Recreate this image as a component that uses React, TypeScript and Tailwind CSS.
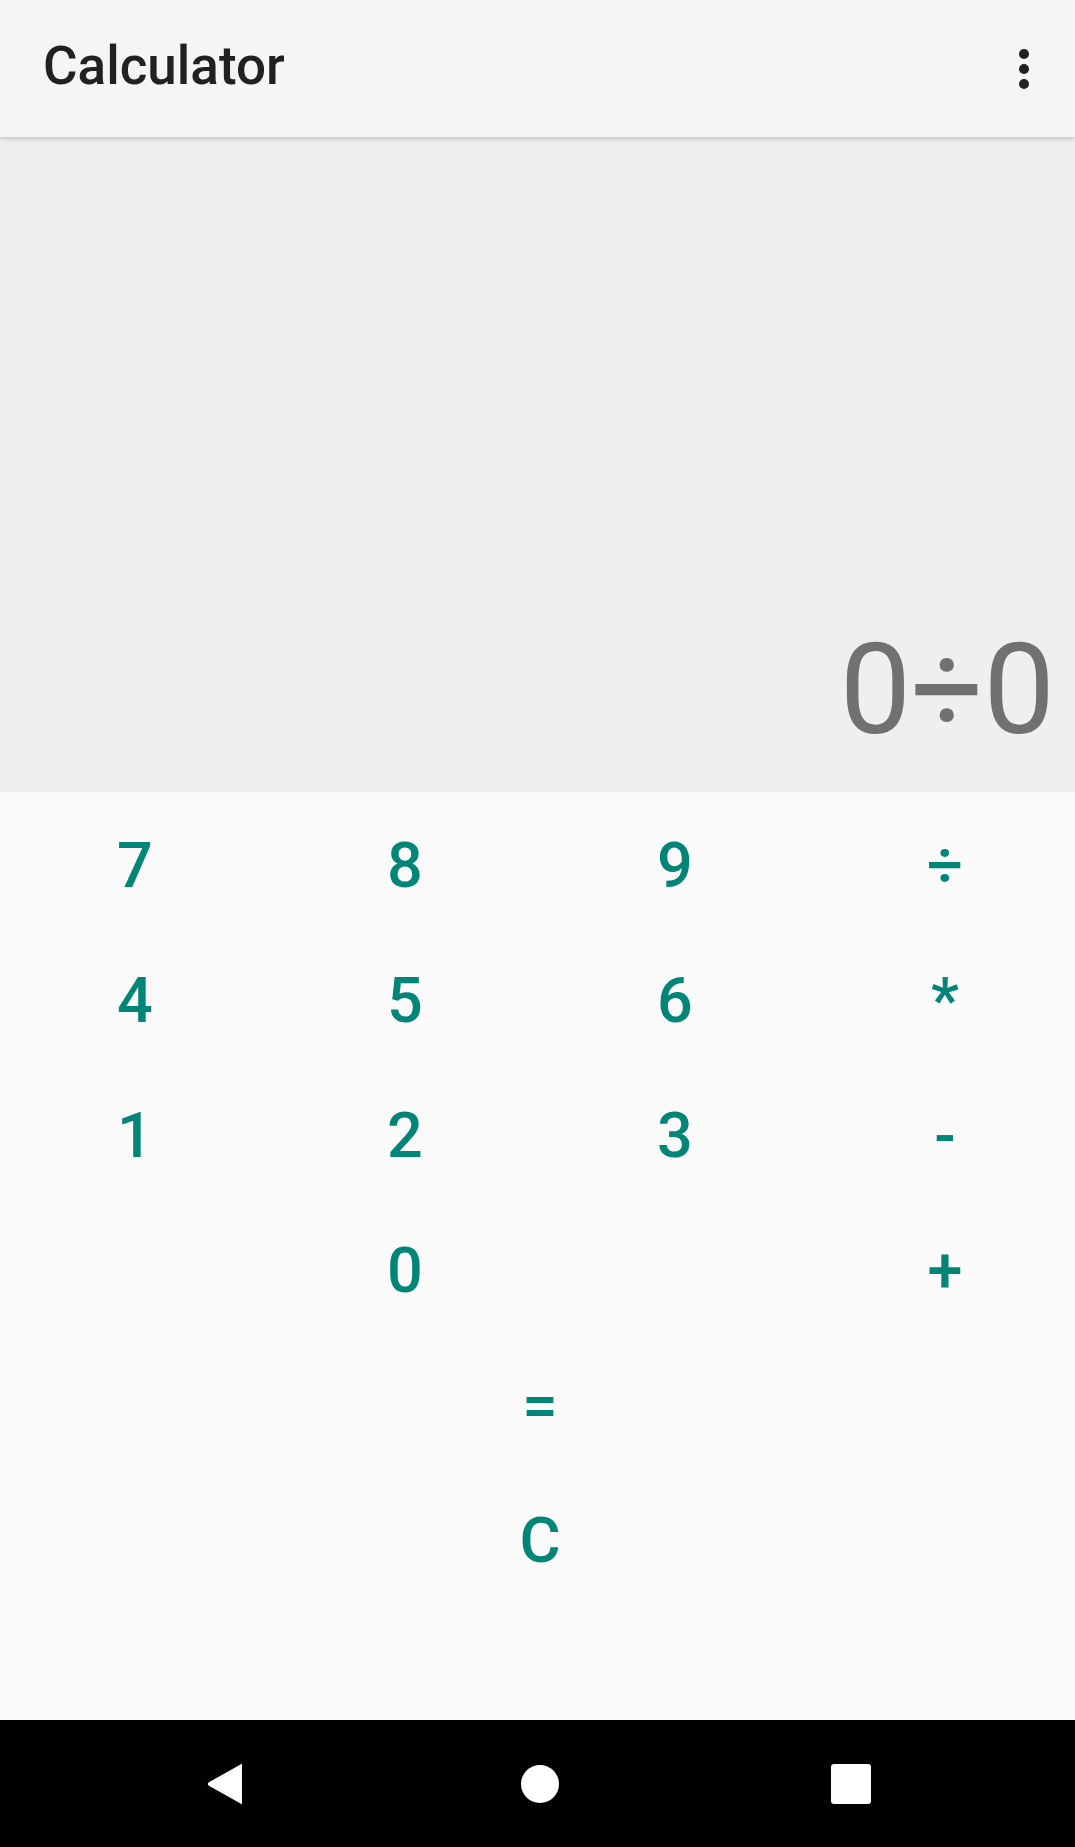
import React, { useState } from 'react';

const keys: { label: string; col: string }[] = [
  { label: '7', col: 'col-start-1' },
  { label: '8', col: 'col-start-2' },
  { label: '9', col: 'col-start-3' },
  { label: '÷', col: 'col-start-4' },
  { label: '4', col: 'col-start-1' },
  { label: '5', col: 'col-start-2' },
  { label: '6', col: 'col-start-3' },
  { label: '*', col: 'col-start-4' },
  { label: '1', col: 'col-start-1' },
  { label: '2', col: 'col-start-2' },
  { label: '3', col: 'col-start-3' },
  { label: '-', col: 'col-start-4' },
  { label: '0', col: 'col-start-2' },
  { label: '+', col: 'col-start-4' },
];

const App: React.FC = () => {
  const [display, setDisplay] = useState('0÷0');

  const press = (k: string) => {
    if (k === 'C') setDisplay('');
    else setDisplay(display + k);
  };

  return (
    <div className="flex h-[1847px] w-full flex-col overflow-hidden bg-[#fafafa] font-['Roboto',sans-serif]">
      {/* app bar */}
      <div className="relative z-10 flex h-[137px] shrink-0 items-center justify-between bg-[#f5f5f5] pl-[43px] pr-[38px] shadow-[0_2px_4px_rgba(0,0,0,0.18)]">
        <h1 className="pb-[3px] text-[53px] font-medium text-[#212121]">Calculator</h1>
        <button className="flex flex-col items-center gap-[5px] px-2 py-2">
          <span className="h-[10px] w-[10px] rounded-full bg-[#212121]" />
          <span className="h-[10px] w-[10px] rounded-full bg-[#212121]" />
          <span className="h-[10px] w-[10px] rounded-full bg-[#212121]" />
        </button>
      </div>

      {/* display */}
      <div className="flex flex-1 items-end justify-end bg-[#efefef] pb-[7px] pr-[20px]">
        <span className="text-[127px] leading-normal text-[#717171]">{display}</span>
      </div>

      {/* keypad */}
      <div className="grid h-[928px] w-[1080px] shrink-0 auto-rows-[135px] grid-cols-[repeat(4,270px)] content-start bg-[#fafafa] pt-[7px]">
        {keys.map((k) => (
          <button
            key={k.label}
            onClick={() => press(k.label)}
            className={`${k.col} flex items-center justify-center text-[63px] font-medium text-[#008577]`}
          >
            {k.label}
          </button>
        ))}
        <button onClick={() => press('=')} className="col-span-4 flex items-center justify-center text-[63px] font-medium text-[#008577]">
          =
        </button>
        <button onClick={() => press('C')} className="col-span-4 flex items-center justify-center text-[63px] font-medium text-[#008577]">
          C
        </button>
      </div>

      {/* nav bar */}
      <div className="grid h-[127px] w-[1080px] shrink-0 grid-cols-[repeat(3,315px)] content-center items-center justify-center bg-black">
        <div className="flex justify-center">
          <svg width="38" height="42" viewBox="0 0 38 42">
            <path d="M36 2 L36 40 Q36 42 34.5 40.5 L2.5 22.5 Q1 21 2.5 19.5 L34.5 1.5 Q36 0 36 2 Z" fill="#fff" />
          </svg>
        </div>
        <div className="flex justify-center">
          <span className="h-[38px] w-[38px] rounded-full bg-white" />
        </div>
        <div className="flex justify-center pr-[8px]">
          <span className="h-[40px] w-[40px] rounded-[3px] bg-white" />
        </div>
      </div>
    </div>
  );
};

export default App;
